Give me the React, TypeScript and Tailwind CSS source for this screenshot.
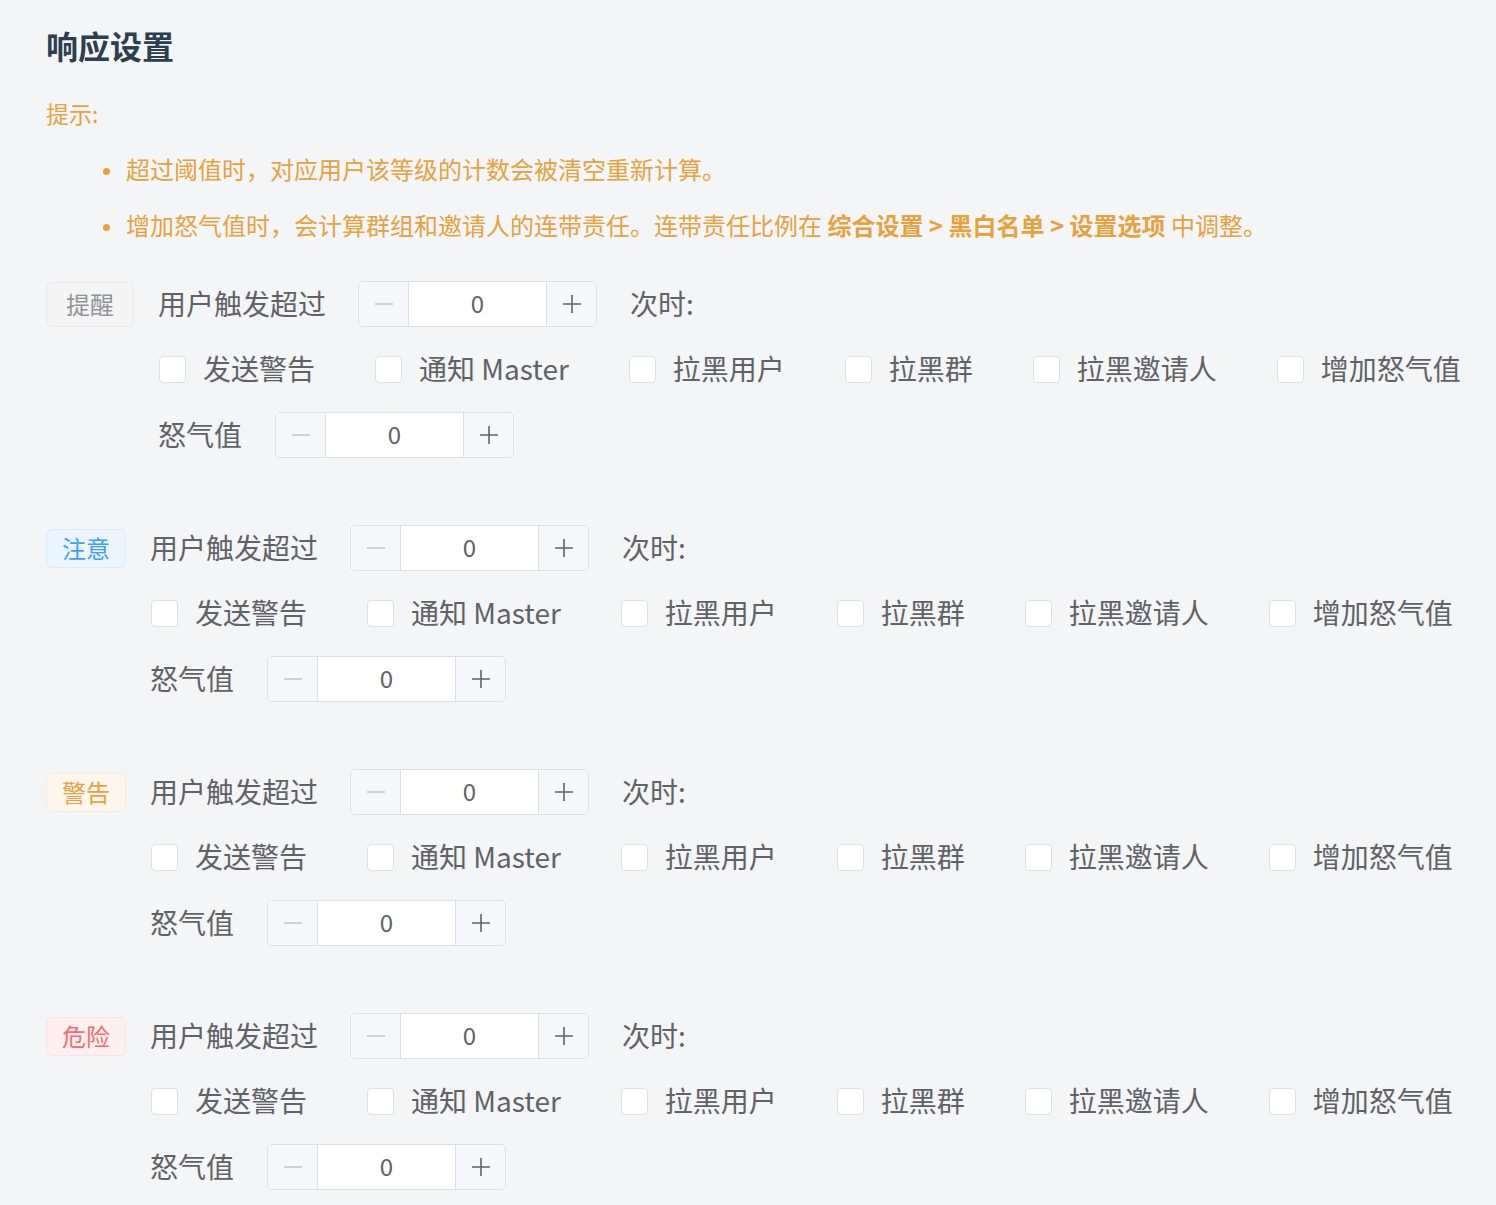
import React from 'react';

type TagType = 'info' | 'primary' | 'warning' | 'danger';

const tagStyles: Record<TagType, string> = {
  info: 'h-[45px] px-[19px] bg-[#f4f4f5] border-[#e9e9eb] text-[#909399]',
  primary: 'h-[39px] px-[15px] bg-[#ecf5ff] border-[#d9ecff] text-[#409eff]',
  warning: 'h-[39px] px-[15px] bg-[#fdf6ec] border-[#faecd8] text-[#e6a23c]',
  danger: 'h-[39px] px-[15px] bg-[#fef0f0] border-[#fde2e2] text-[#f56c6c]',
};

const levels: { label: string; type: TagType }[] = [
  { label: '提醒', type: 'info' },
  { label: '注意', type: 'primary' },
  { label: '警告', type: 'warning' },
  { label: '危险', type: 'danger' },
];

const actions = ['发送警告', '通知 Master', '拉黑用户', '拉黑群', '拉黑邀请人', '增加怒气值'];

function InputNumber() {
  return (
    <div className="flex h-[46px] w-[239px] shrink-0 overflow-hidden rounded-[5px] border border-[#dcdfe6] bg-white">
      <span className="flex w-[50px] items-center justify-center border-r border-[#dcdfe6] bg-[#f5f7fa] text-[#c0c4cc]">
        <svg width="20" height="20" viewBox="0 0 20 20">
          <path d="M1 10h18" stroke="currentColor" strokeWidth="1.6" />
        </svg>
      </span>
      <span className="flex flex-1 items-center justify-center pb-[2px] text-[24px] text-[#606266]">0</span>
      <span className="flex w-[50px] items-center justify-center border-l border-[#dcdfe6] bg-[#f5f7fa] text-[#606266]">
        <svg width="20" height="20" viewBox="0 0 20 20">
          <path d="M1 10h18M10 1v18" stroke="currentColor" strokeWidth="1.6" />
        </svg>
      </span>
    </div>
  );
}

function Checkbox({ label }: { label: string }) {
  return (
    <label className="mr-[60px] flex shrink-0 items-center whitespace-nowrap last:mr-0">
      <span className="h-[27px] w-[27px] rounded-[4px] border border-[#dcdfe6] bg-white" />
      <span className="ml-[17px] pb-[3px] text-[28px] text-[#606266]">{label}</span>
    </label>
  );
}

function LevelSection({ label, type }: { label: string; type: TagType }) {
  return (
    <div className="flex items-start gap-[25px]">
      <div className="flex h-[46px] items-center">
        <span className={`inline-flex items-center justify-center rounded-[6px] border text-[24px] ${tagStyles[type]}`}>
          {label}
        </span>
      </div>
      <div className="flex flex-col gap-[19.5px]">
        <div className="flex h-[46px] items-center text-[28px] text-[#606266]">
          <span className="-ml-[1px] pb-[2px]">用户触发超过</span>
          <div className="ml-[32px]">
            <InputNumber />
          </div>
          <span className="ml-[33px] pb-[2px]">次时:</span>
        </div>
        <div className="flex h-[46px] items-center">
          {actions.map((a) => (
            <Checkbox key={a} label={a} />
          ))}
        </div>
        <div className="flex h-[46px] items-center text-[28px] text-[#606266]">
          <span className="-ml-[1px] pb-[2px]">怒气值</span>
          <div className="ml-[33px]">
            <InputNumber />
          </div>
        </div>
      </div>
    </div>
  );
}

export default function App() {
  return (
    <div
      className="min-h-screen bg-[#f4f5f7] pl-[46px] pt-[23px]"
      style={{ fontFamily: '"Noto Sans CJK SC", "Noto Sans", sans-serif' }}
    >
      <h1 className="text-[32px] font-bold leading-[44px] text-[#2c3e50]">响应设置</h1>

      <div className="mt-[30px] text-[23px] leading-[32px] text-[#e6a23c]">提示:</div>
      <ul className="mt-[13px] text-[24px] text-[#e6a23c]">
        <li className="flex h-[56px] items-center">
          <span className="ml-[57px] mt-[2px] h-[7px] w-[7px] rounded-full bg-[#e6a23c]" />
          <span className="ml-[16px] pb-[2px]">超过阈值时，对应用户该等级的计数会被清空重新计算。</span>
        </li>
        <li className="flex h-[56px] items-center">
          <span className="ml-[57px] mt-[2px] h-[7px] w-[7px] rounded-full bg-[#e6a23c]" />
          <span className="ml-[16px] whitespace-nowrap pb-[2px]">
            增加怒气值时，会计算群组和邀请人的连带责任。连带责任比例在{' '}
            <b className="font-bold">综合设置 &gt; 黑白名单 &gt; 设置选项</b> 中调整。
          </span>
        </li>
      </ul>

      <div className="mt-[27px] flex flex-col gap-[67px] pb-[15px]">
        {levels.map((l) => (
          <LevelSection key={l.label} label={l.label} type={l.type} />
        ))}
      </div>
    </div>
  );
}
